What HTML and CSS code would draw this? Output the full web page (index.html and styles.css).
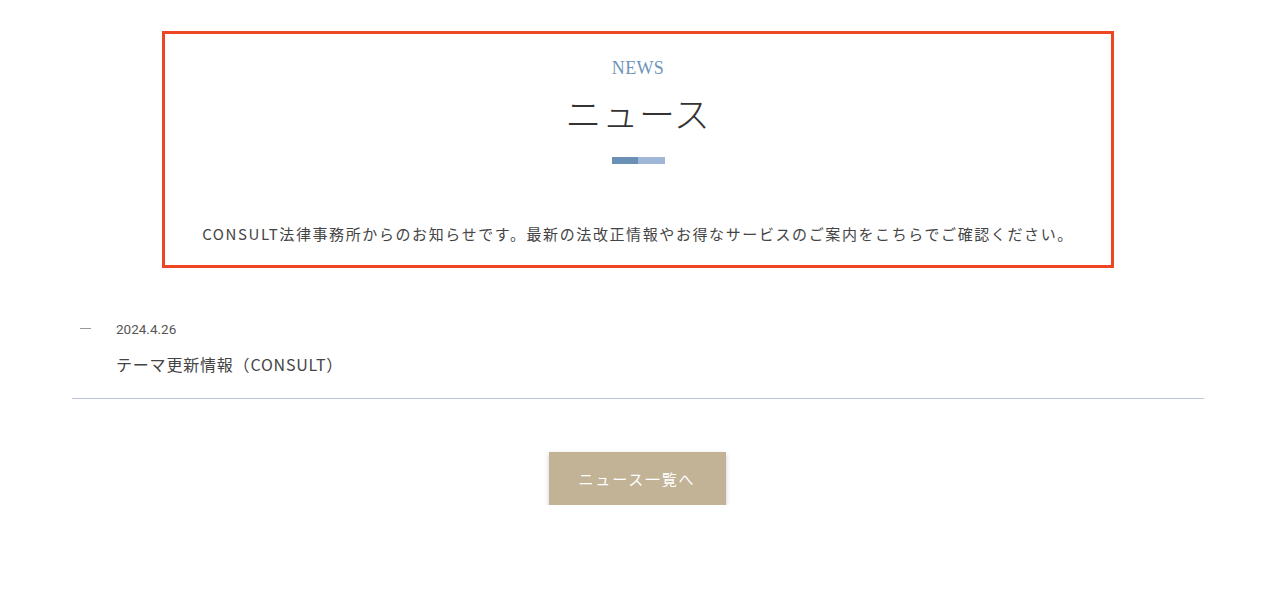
FILE: index.html
```html
<!DOCTYPE html>
<html lang="ja">
<head>
<meta charset="utf-8">
<link rel="stylesheet" href="styles.css">
</head>
<body>
<section class="news">
  <div class="wrap">
    <div class="intro">
      <p class="intro-en">NEWS</p>
      <h2 class="intro-title">ニュース</h2>
      <div class="intro-bar"><span class="bar-dark"></span><span class="bar-light"></span></div>
      <p class="intro-text">CONSULT法律事務所からのお知らせです。最新の法改正情報やお得なサービスのご案内をこちらでご確認ください。</p>
    </div>
    <ul class="news-list">
      <li class="news-item">
        <span class="news-dash"></span>
        <div class="news-body">
          <p class="news-date">2024.4.26</p>
          <p class="news-title">テーマ更新情報（CONSULT）</p>
        </div>
      </li>
    </ul>
    <div class="more">
      <a class="more-btn" href="#">ニュース一覧へ</a>
    </div>
  </div>
</section>
</body>
</html>
```

FILE: styles.css
```css
* { box-sizing: border-box; }
html, body { margin: 0; padding: 0; background: #fff; }
body {
  font-family: "Noto Sans CJK JP", "Noto Sans", sans-serif;
  color: #444;
}
p, h2, ul { margin: 0; padding: 0; }
.news { padding-top: 31px; }
.wrap {
  width: 1132px;
  margin-left: 72px;
}
.intro {
  margin: 0 90px;
  border: 3px solid #ee4623;
  padding: 25px 0 19px;
  text-align: center;
}
.intro-en {
  font-family: "Liberation Serif", "DejaVu Serif", serif;
  font-size: 18px;
  line-height: 18px;
  color: #6d95bb;
  letter-spacing: 0.02em;
}
.intro-title {
  margin-top: 14px;
  font-family: "Noto Sans CJK JP", serif;
  font-weight: 300;
  font-size: 36px;
  line-height: 43px;
  letter-spacing: 0.02em;
  color: #333;
}
.intro-bar {
  margin: 23px auto 0;
  width: 53px;
  height: 7px;
  display: flex;
}
.bar-dark { flex: 0 0 26px; background: #6a91b5; }
.bar-light { flex: 1; background: #9fb6d6; }
.intro-text {
  margin-top: 58px;
  font-size: 15px;
  line-height: 24px;
  letter-spacing: 1.6px;
  color: #444;
}
.news-list { list-style: none; margin-top: 51px; }
.news-item {
  display: flex;
  align-items: flex-start;
  padding: 0 0 22px 8px;
  border-bottom: 1px solid #bcc3db;
}
.news-dash {
  flex: 0 0 11px;
  height: 1px;
  background: #999;
  margin-top: 9px;
  margin-right: 25px;
}
.news-date {
  font-family: "Roboto", "Noto Sans", sans-serif;
  font-size: 13.5px;
  line-height: 20px;
  color: #555;
}
.news-title {
  margin-top: 13px;
  font-size: 16px;
  line-height: 24px;
  letter-spacing: 0.05em;
  color: #444;
}
.more {
  margin-top: 53px;
  display: flex;
  justify-content: center;
}
.more-btn {
  display: flex;
  align-items: center;
  justify-content: center;
  width: 177px;
  height: 53px;
  margin-left: -2px;
  background: #c3b396;
  color: #fff;
  text-decoration: none;
  font-size: 15px;
  letter-spacing: 0.12em;
  box-shadow: 0 2px 5px rgba(0,0,0,0.2);
}
```
